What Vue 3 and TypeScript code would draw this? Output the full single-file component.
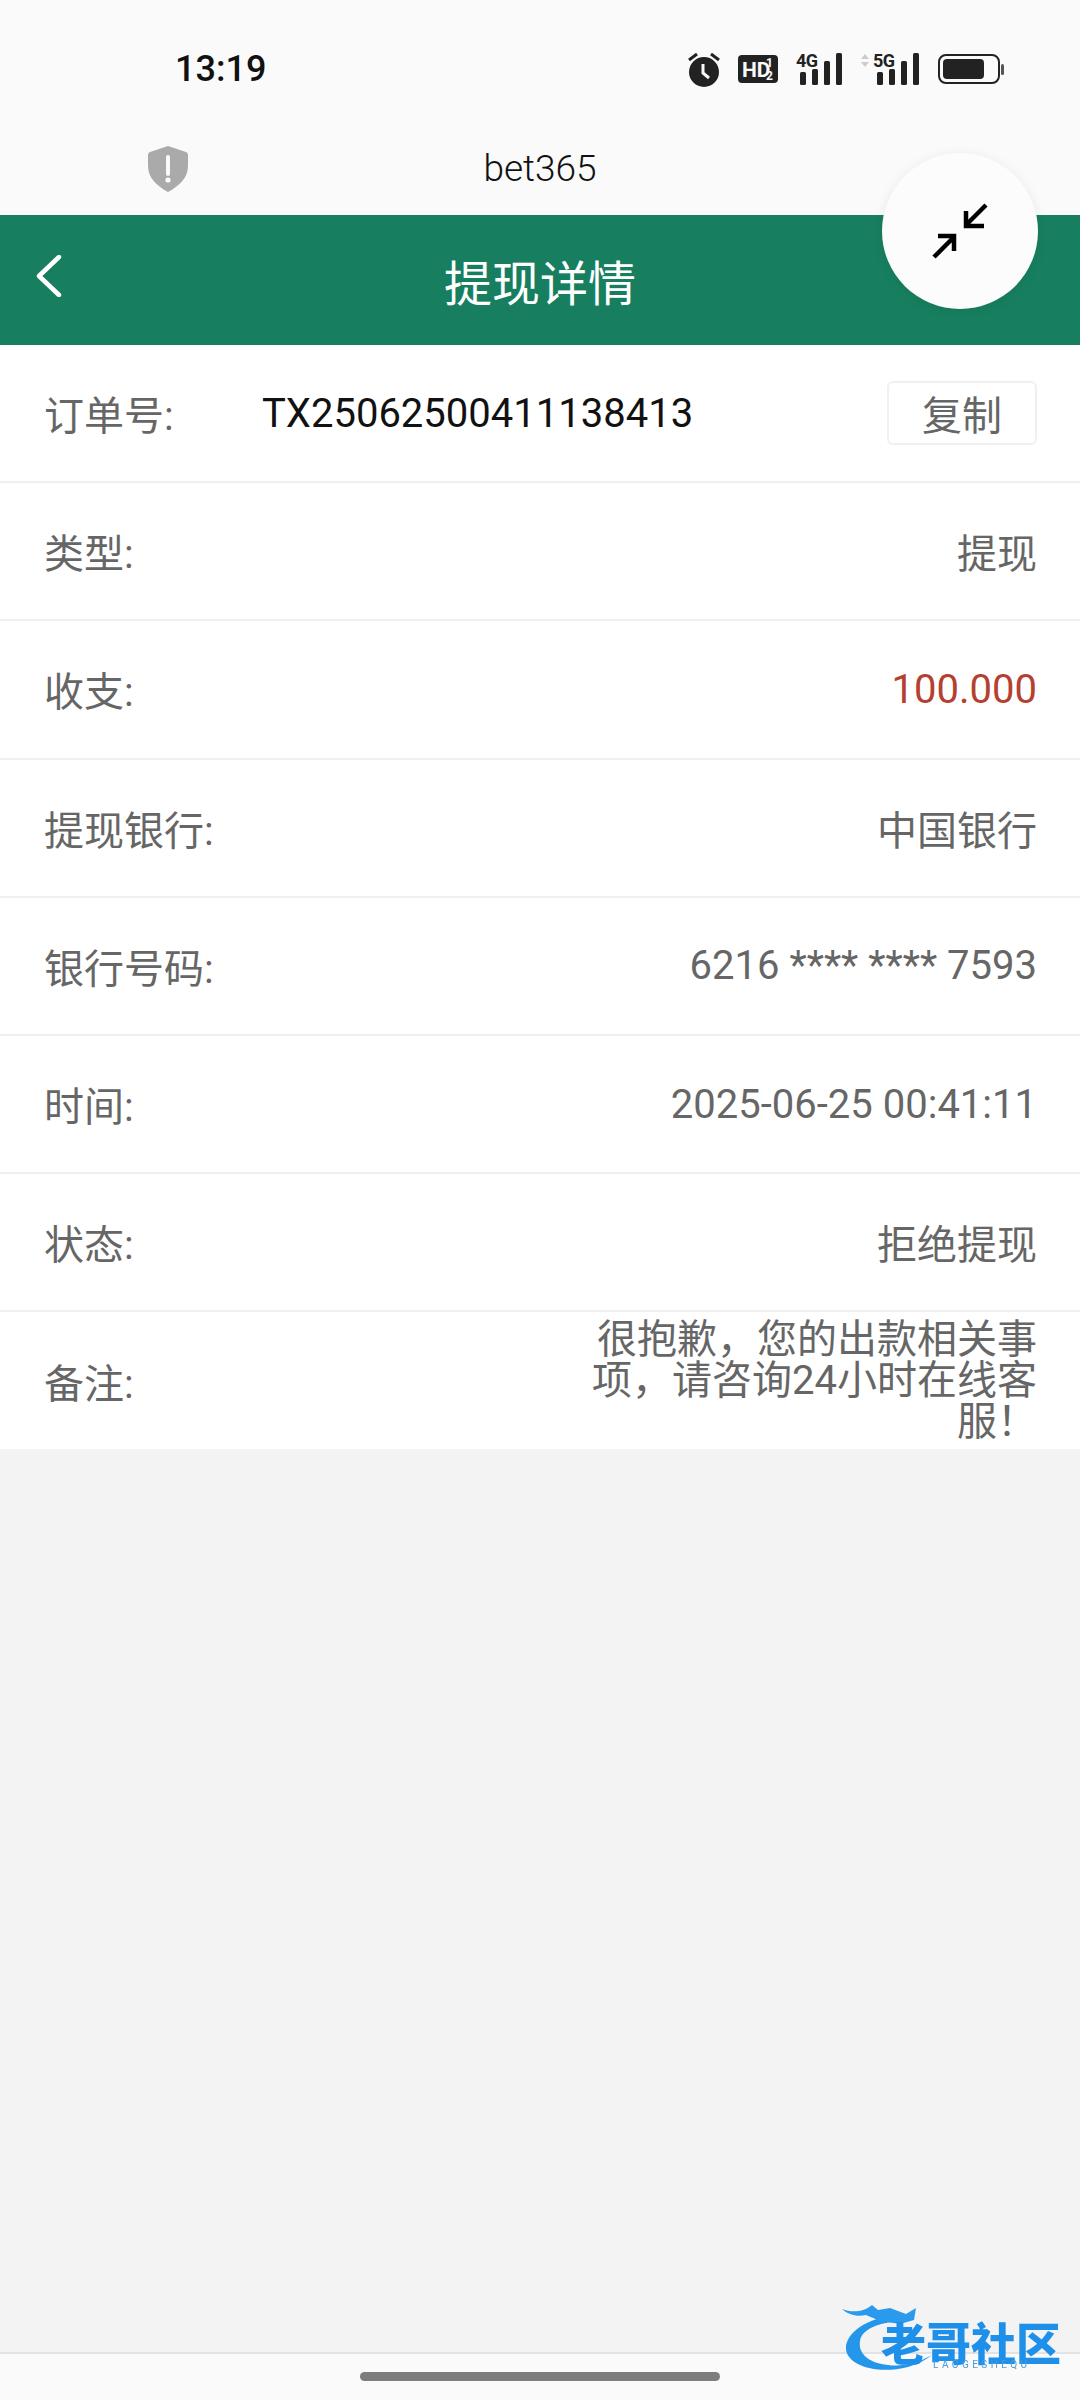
<template>
  <div class="page">
    <div class="status-bar">
      <span class="clock">13:19</span>
      <div class="status-icons">
        <svg class="ic-alarm" width="32" height="36" viewBox="0 0 32 36">
          <circle cx="16" cy="21" r="15" fill="#222" />
          <path d="M15 13v9l6 5" fill="none" stroke="#fafafa" stroke-width="3" />
          <path d="M1 9l8-6M31 9l-8-6" stroke="#222" stroke-width="3" />
        </svg>
        <svg class="ic-hd" width="40" height="28" viewBox="0 0 40 28">
          <rect width="40" height="28" rx="4" fill="#222" />
          <text x="4" y="22" class="svg-hd">HD</text>
          <text x="28" y="12" class="svg-sub">1</text>
          <text x="28" y="25" class="svg-sub">2</text>
        </svg>
        <svg width="47" height="34" viewBox="0 0 47 34">
          <text x="0" y="15" class="svg-net">4G</text>
          <rect x="4" y="20" width="6" height="13" rx="1.5" fill="#222" />
          <rect x="16" y="17" width="6" height="16" rx="1.5" fill="#222" />
          <rect x="28" y="9" width="6" height="24" rx="1.5" fill="#222" />
          <rect x="40" y="1" width="6" height="32" rx="1.5" fill="#222" />
        </svg>
        <svg width="59" height="34" viewBox="0 0 59 34">
          <path d="M0 7l4-5 4 5zM0 10l4 5 4-5z" fill="#ccc" />
          <text x="12" y="15" class="svg-net">5G</text>
          <rect x="16" y="20" width="6" height="13" rx="1.5" fill="#222" />
          <rect x="28" y="17" width="6" height="16" rx="1.5" fill="#222" />
          <rect x="40" y="9" width="6" height="24" rx="1.5" fill="#222" />
          <rect x="52" y="1" width="6" height="32" rx="1.5" fill="#222" />
        </svg>
        <svg class="ic-battery" width="66" height="30" viewBox="0 0 66 30">
          <rect x="1" y="1" width="60" height="28" rx="7" fill="none" stroke="#222" stroke-width="2" />
          <rect x="5" y="5" width="41" height="20" rx="4" fill="#222" />
          <rect x="63" y="10" width="3" height="11" rx="1.5" fill="#555" />
        </svg>
      </div>
    </div>

    <div class="browser-bar">
      <svg class="shield" width="40" height="46" viewBox="0 0 40 46">
        <path d="M20 0l18 6c2 1 2 2 2 4v10c0 12-9 20-20 26C9 40 0 32 0 20V10c0-2 0-3 2-4z" fill="#aaa" />
        <path d="M20 11v17" stroke="#fafafa" stroke-width="4" stroke-linecap="round" />
        <circle cx="20" cy="34" r="2.6" fill="#fafafa" />
      </svg>
      <span class="site-name">bet365</span>
    </div>

    <header class="nav-bar">
      <svg class="back" width="26" height="42" viewBox="0 0 26 42">
        <path d="M23 2L3 21l20 19" fill="none" stroke="#fff" stroke-width="4.5" stroke-linecap="round" stroke-linejoin="round" />
      </svg>
      <h1 class="nav-title">提现详情</h1>
    </header>

    <section class="detail-list">
      <div class="row">
        <span class="label order-label">订单号:</span>
        <span class="order-no">{{ orderNo }}</span>
        <button class="copy-btn" type="button">复制</button>
      </div>
      <div v-for="item in rows" :key="item.label" class="row">
        <span class="label">{{ item.label }}</span>
        <span class="value" :class="{ red: item.red }">{{ item.value }}</span>
      </div>
      <div class="row row-note">
        <span class="label">备注:</span>
        <span class="value note">很抱歉，您的出款相关事项，请咨询24小时在线客服！</span>
      </div>
    </section>

    <div class="filler"></div>

    <div class="home-bar">
      <div class="home-handle"></div>
    </div>

    <!-- 悬浮的收起按钮 -->
    <div class="float-btn">
      <svg width="56" height="56" viewBox="0 0 56 56">
        <path d="M54 2L34 22M34 8v15h18M2 54l20-20M22 48V33H6" fill="none" stroke="#000" stroke-width="4.5" />
      </svg>
    </div>

    <!-- 角标水印 -->
    <div class="watermark">
      <svg class="dragon" width="100" height="72" viewBox="0 0 100 72">
        <path d="M58 12C22 14 3 32 4 46c1 16 30 26 62 18 10-3 18-7 24-12-14 8-30 12-44 10C26 60 16 50 18 38c2-12 18-18 40-20z" fill="#2597ea" />
        <path d="M0 6c10 4 22 3 30-4l6 5 12-2 16 6 10-6-2 12-14 4-20-3-14-6C16 14 6 12 0 6z" fill="#2a9bec" />
      </svg>
      <span class="wm-title">老哥社区</span>
      <span class="wm-sub">LAOGESHEQU</span>
    </div>
  </div>
</template>

<script setup lang="ts">
interface DetailRow {
  label: string;
  value: string;
  red?: boolean;
}

const orderNo = 'TX25062500411138413';

const rows: DetailRow[] = [
  { label: '类型:', value: '提现' },
  { label: '收支:', value: '100.000', red: true },
  { label: '提现银行:', value: '中国银行' },
  { label: '银行号码:', value: '6216 **** **** 7593' },
  { label: '时间:', value: '2025-06-25 00:41:11' },
  { label: '状态:', value: '拒绝提现' }
];
</script>

<style scoped>
.page {
  position: relative;
  display: flex;
  flex-direction: column;
  width: 1080px;
  height: 2400px;
  overflow: hidden;
  background: #f3f3f3;
  font-family: Roboto, "Noto Sans CJK SC", sans-serif;
}

.status-bar {
  display: flex;
  align-items: center;
  justify-content: space-between;
  height: 115px;
  padding: 22px 76px 0 175px;
  box-sizing: border-box;
  background: #fafafa;
}

.clock {
  font-size: 36px;
  font-weight: 500;
  color: #111;
}

.status-icons {
  display: flex;
  align-items: center;
  gap: 18px;
}

.svg-hd {
  font: 700 21px Roboto, sans-serif;
  fill: #fafafa;
}

.svg-sub {
  font: 700 12px Roboto, sans-serif;
  fill: #fafafa;
}

.svg-net {
  font: 700 18px Roboto, sans-serif;
  fill: #222;
  letter-spacing: -0.5px;
}

.browser-bar {
  position: relative;
  display: flex;
  align-items: center;
  justify-content: center;
  height: 100px;
  background: #fafafa;
}

.shield {
  position: absolute;
  left: 148px;
  top: 31px;
}

.site-name {
  margin-top: 6px;
  font-size: 37px;
  font-weight: 300;
  color: #111;
}

.nav-bar {
  position: relative;
  display: flex;
  align-items: center;
  justify-content: center;
  height: 130px;
  background: #177f5f;
}

.back {
  position: absolute;
  left: 36px;
  top: 40px;
}

.nav-title {
  margin: 0;
  font-size: 48px;
  font-weight: 400;
  color: #fff;
}

.detail-list {
  background: #fff;
}

.row {
  display: flex;
  align-items: center;
  justify-content: space-between;
  height: 138.2px;
  padding: 0 43px 0 44px;
  box-sizing: border-box;
  border-bottom: 2px solid #f0f0f0;
  font-size: 40px;
}

.row-note {
  height: 137px;
  border-bottom: none;
}

.label {
  color: #666;
}

.order-label {
  width: 218px;
  flex: none;
}

.order-no {
  flex: 1;
  color: #111;
}

.copy-btn {
  width: 150px;
  height: 64px;
  padding: 0;
  border: 2px solid #f0f0f0;
  border-radius: 6px;
  background: #fff;
  font: inherit;
  color: #666;
}

.value {
  color: #666;
  text-align: right;
}

.value.red {
  color: #b5402f;
}

.note {
  width: 450px;
  line-height: 41px;
}

.filler {
  flex: 1;
}

.home-bar {
  display: flex;
  justify-content: center;
  height: 48px;
  padding-top: 18px;
  box-sizing: border-box;
  border-top: 2px solid #e2e2e2;
  background: #fafafa;
}

.home-handle {
  width: 360px;
  height: 9px;
  border-radius: 5px;
  background: #7d7d7d;
}

.float-btn {
  position: absolute;
  left: 882px;
  top: 153px;
  display: flex;
  align-items: center;
  justify-content: center;
  width: 156px;
  height: 156px;
  border-radius: 50%;
  background: #fcfcfc;
  box-shadow: 0 2px 12px rgba(0, 0, 0, 0.08);
}

.watermark {
  position: absolute;
  left: 842px;
  top: 2303px;
  width: 224px;
  height: 74px;
  filter: blur(0.6px);
}

.dragon {
  position: absolute;
  left: 0;
  top: 0;
}

.wm-title {
  position: absolute;
  left: 39px;
  top: 17px;
  font-size: 45px;
  line-height: 52px;
  font-weight: 900;
  color: #1e90ea;
  white-space: nowrap;
}

.wm-sub {
  position: absolute;
  left: 91px;
  top: 56px;
  font-size: 10px;
  line-height: 12px;
  letter-spacing: 3.4px;
  color: #4a9ad8;
  white-space: nowrap;
}
</style>

<style>
body {
  margin: 0;
}
</style>
